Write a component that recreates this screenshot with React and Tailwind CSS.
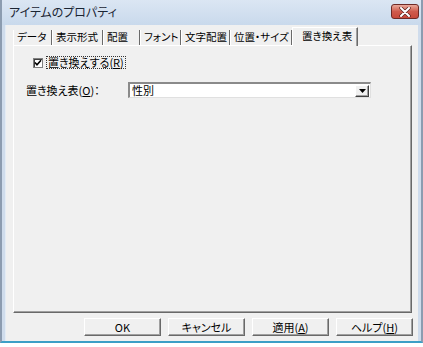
export default function App() {
  const tabs = [
    { label: "データ", w: "w-[39px]" },
    { label: "表示形式", w: "w-[51px]" },
    { label: "配置", w: "w-[37px]" },
    { label: "フォント", w: "w-[41px]" },
    { label: "文字配置", w: "w-[49px]" },
    { label: "位置・サイズ", w: "w-[62px]" },
  ];
  const Btn = ({ children }) => (
    <div className="w-[77px] h-[18px] flex items-center justify-center bg-[#f0f0f0] border border-t-white border-l-white border-r-[#696969] border-b-[#696969] shadow-[inset_-1px_-1px_0_#a0a0a0]">
      <span className="leading-none">{children}</span>
    </div>
  );
  return (
    <div className="w-[423px] h-[347px] bg-white text-[11px] text-black font-['Noto_Sans_CJK_JP','Noto_Sans',sans-serif] [font-feature-settings:'palt'] overflow-hidden">
      <div className="h-[343px] flex flex-col bg-[#cfdcec] border-l-2 border-r-2 border-[#8c9cb0] border-b-2 border-b-[#3c9fc6] px-[3px]">
        {/* title bar */}
        <div className="h-[25px] flex items-start justify-between bg-gradient-to-b from-[#dbe6f3] to-[#c9d9ec] -mx-[3px] px-[7px]">
          <span className="text-[12px] text-[#1b2533] mt-[6px] leading-none">アイテムのプロパティ</span>
          <div className="mt-[4px] -mr-[5px] w-[28px] h-[15px] rounded-[3px] border border-[#6e2a26] bg-gradient-to-b from-[#e8a99c] via-[#cf5a4c] to-[#c8483a] flex items-center justify-center">
            <svg width="12" height="10" viewBox="0 0 12 10">
              <path d="M2 1 L10 9 M10 1 L2 9" stroke="#5a2320" strokeWidth="3.4" strokeLinecap="round" />
              <path d="M2 1 L10 9 M10 1 L2 9" stroke="#ffffff" strokeWidth="2" strokeLinecap="round" />
            </svg>
          </div>
        </div>
        {/* client */}
        <div className="flex-1 bg-[#f0f0f0] flex flex-col pl-[7px] pr-[6px] pt-[2px] border-l border-[#e4ecf5]">
          {/* tabs */}
          <div className="flex items-end h-[18px] relative z-10 text-[10.5px]">
            {tabs.map((t) => (
              <div key={t.label} className={`${t.w} h-[15px] flex items-center pl-[3px] border-r border-[#6a6a6a] border-l border-l-white whitespace-nowrap`}>
                <span className="leading-none">{t.label}</span>
              </div>
            ))}
            <div className="w-[66px] h-[19px] -mb-[1px] flex items-center pl-[9px] bg-[#f0f0f0] border-t border-l border-white border-r border-r-[#6a6a6a] shadow-[inset_-1px_0_0_#a0a0a0] whitespace-nowrap">
              <span className="leading-none -mt-[1px]">置き換え表</span>
            </div>
          </div>
          {/* panel */}
          <div className="h-[268px] border-t border-l border-white border-r border-b border-r-[#696969] border-b-[#696969] shadow-[inset_-1px_-1px_0_#a0a0a0] flex flex-col">
            <div className="flex items-center h-[13px] mt-[10px] pl-[19px]">
              <div className="w-[10px] h-[10px] bg-white border border-[#808080] shadow-[inset_1px_1px_0_#404040] flex items-center justify-center">
                <svg width="8" height="8" viewBox="0 0 8 8">
                  <path d="M1 3.5 L3 5.8 L7 1.2" fill="none" stroke="#000" strokeWidth="1.6" />
                </svg>
              </div>
              <div className="ml-[3px] px-[1px] h-[13px] flex items-center border border-dotted border-[#333]">
                <span className="leading-none">置き換えする(<span className="underline">R</span>)</span>
              </div>
            </div>
            <div className="flex items-center mt-[13px] pl-[12px]">
              <span className="w-[102px] leading-none">置き換え表(<span className="underline">O</span>)：</span>
              <div className="w-[243px] h-[16px] bg-white border-t-2 border-l-2 border-t-[#8a8a8a] border-l-[#8a8a8a] border-r border-b border-r-[#e0e0e0] border-b-[#e0e0e0] flex items-center justify-between pl-[2px] pr-[1px]">
                <span className="leading-none">性別</span>
                <div className="w-[14px] h-[12px] bg-[#f0f0f0] border border-t-white border-l-white border-r-[#404040] border-b-[#404040] shadow-[inset_-1px_-1px_0_#a0a0a0] flex items-center justify-center">
                  <svg width="7" height="4" viewBox="0 0 7 4">
                    <path d="M0 0 H7 L3.5 4 Z" fill="#000" />
                  </svg>
                </div>
              </div>
            </div>
          </div>
          {/* buttons */}
          <div className="flex justify-end gap-[7px] mt-[5px] -mr-[1px]">
            <Btn>OK</Btn>
            <Btn>キャンセル</Btn>
            <Btn>適用(<span className="underline">A</span>)</Btn>
            <Btn>ヘルプ(<span className="underline">H</span>)</Btn>
          </div>
        </div>
      </div>
    </div>
  );
}
